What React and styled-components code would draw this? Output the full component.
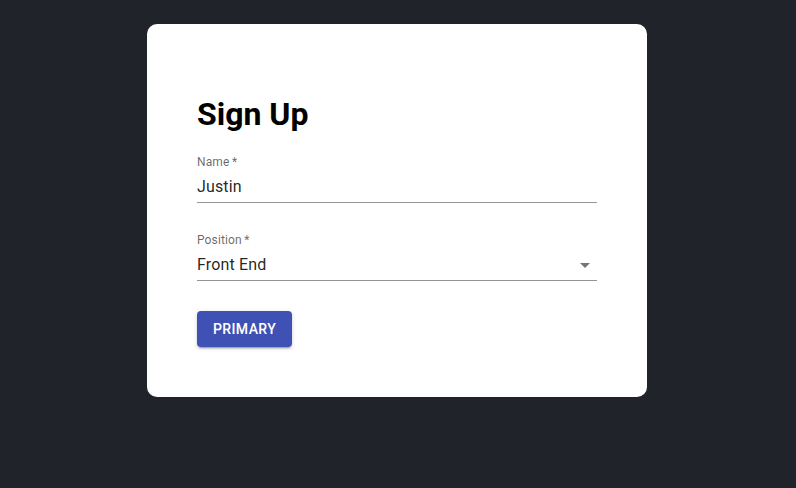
import React from "react";
import styled, { createGlobalStyle } from "styled-components";

const Global = createGlobalStyle`
  html, body { margin: 0; padding: 0; background: #20232a; }
  body { font-family: Roboto, "Liberation Sans", sans-serif; }
  * { box-sizing: border-box; }
`;

const Page = styled.div`
  min-height: 488px;
  display: flex;
  justify-content: center;
  align-items: flex-start;
  padding: 24px 2px 0 0;
`;

const Card = styled.form`
  width: 500px;
  background: #fff;
  border-radius: 10px;
  padding: 50px;
  display: flex;
  flex-direction: column;
  align-items: flex-start;
`;

const Title = styled.h1`
  margin: 22px 0 22px;
  font-size: 32px;
  line-height: 37px;
  font-weight: 700;
  color: #000;
`;

const Field = styled.div`
  position: relative;
  width: 100%;
  padding-top: 16px;
  margin-bottom: ${(p) => p.$gap || 30}px;
`;

const Label = styled.label`
  position: absolute;
  left: 0;
  top: -1.5px;
  font-size: 12px;
  line-height: 17px;
  color: rgba(0, 0, 0, 0.6);
  letter-spacing: 0.01em;
`;

const InputRow = styled.div`
  position: relative;
  display: flex;
  align-items: center;
  height: 32px;
  padding: 4px 0 5px;
  border-bottom: 1px solid rgba(0, 0, 0, 0.42);
  font-size: 16px;
  line-height: 23px;
  color: rgba(0, 0, 0, 0.87);
  letter-spacing: 0.00938em;
`;

const Value = styled.span`
  flex: 1;
`;

const Arrow = styled.svg`
  position: absolute;
  right: 0;
  top: 4px;
  width: 24px;
  height: 24px;
  fill: rgba(0, 0, 0, 0.54);
`;

const Button = styled.button`
  border: 0;
  margin: 0;
  padding: 6px 16px;
  border-radius: 4px;
  background: #3f51b5;
  color: #fff;
  font-family: "Roboto Medium", Roboto, "Liberation Sans", sans-serif;
  font-size: 14px;
  font-weight: 500;
  line-height: 24px;
  letter-spacing: 0.4px;
  text-transform: uppercase;
  box-shadow: 0px 3px 1px -2px rgba(0,0,0,0.2), 0px 2px 2px 0px rgba(0,0,0,0.14), 0px 1px 5px 0px rgba(0,0,0,0.12);
  cursor: pointer;
`;

export default function App() {
  return (
    <>
      <Global />
      <Page>
        <Card onSubmit={(e) => e.preventDefault()}>
          <Title>Sign Up</Title>
          <Field>
            <Label>Name&thinsp;*</Label>
            <InputRow>
              <Value>Justin</Value>
            </InputRow>
          </Field>
          <Field>
            <Label>Position&thinsp;*</Label>
            <InputRow>
              <Value>Front End</Value>
              <Arrow viewBox="0 0 24 24">
                <path d="M7 10l5 5 5-5z" />
              </Arrow>
            </InputRow>
          </Field>
          <Button type="submit">Primary</Button>
        </Card>
      </Page>
    </>
  );
}
